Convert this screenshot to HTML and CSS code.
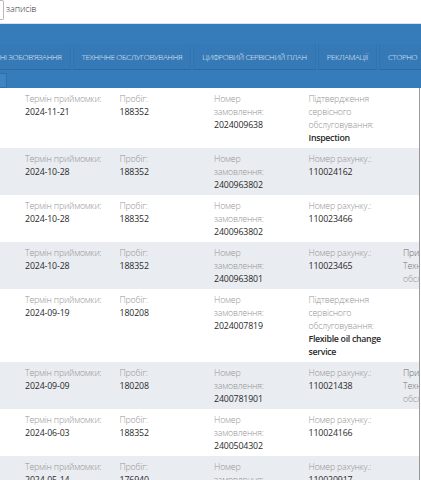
FILE: index.html
```html
<!DOCTYPE html>
<html lang="uk">
<head>
<meta charset="utf-8">
<link rel="stylesheet" href="styles.css">
</head>
<body>
<div class="page">
  <div class="top">
    <span class="lenbox"></span>
    <span class="lentext">записів</span>
  </div>
  <div class="band">
    <div class="tabs">
      <span class="tab">ГАРАНТІЙНІ ЗОБОВ'ЯЗАННЯ</span>
      <span class="tab">ТЕХНІЧНЕ ОБСЛУГОВУВАННЯ</span>
      <span class="tab">ЦИФРОВИЙ СЕРВІСНИЙ ПЛАН</span>
      <span class="tab">РЕКЛАМАЦІЇ</span>
      <span class="tab">СТОРНО</span>
    </div>
    <div class="tools"><span class="tool"></span></div>
  </div>
  <div class="table">
    <div class="row">
      <div class="cell c1"><span class="lbl">Термін приймомки:</span><span class="val">2024-11-21</span></div>
      <div class="cell"><span class="lbl">Пробіг:</span><span class="val">188352</span></div>
      <div class="cell c3"><span class="lbl">Номер замовлення:</span><span class="val">2024009638</span></div>
      <div class="cell"><span class="lbl">Підтвердження сервісного обслуговування:</span><span class="val strong">Inspection</span></div>
      <div class="cell"></div>
    </div>
    <div class="row alt">
      <div class="cell c1"><span class="lbl">Термін приймомки:</span><span class="val">2024-10-28</span></div>
      <div class="cell"><span class="lbl">Пробіг:</span><span class="val">188352</span></div>
      <div class="cell c3"><span class="lbl">Номер замовлення:</span><span class="val">2400963802</span></div>
      <div class="cell"><span class="lbl">Номер рахунку.:</span><span class="val">110024162</span></div>
      <div class="cell"></div>
    </div>
    <div class="row">
      <div class="cell c1"><span class="lbl">Термін приймомки:</span><span class="val">2024-10-28</span></div>
      <div class="cell"><span class="lbl">Пробіг:</span><span class="val">188352</span></div>
      <div class="cell c3"><span class="lbl">Номер замовлення:</span><span class="val">2400963802</span></div>
      <div class="cell"><span class="lbl">Номер рахунку.:</span><span class="val">110023466</span></div>
      <div class="cell"></div>
    </div>
    <div class="row alt">
      <div class="cell c1"><span class="lbl">Термін приймомки:</span><span class="val">2024-10-28</span></div>
      <div class="cell"><span class="lbl">Пробіг:</span><span class="val">188352</span></div>
      <div class="cell c3"><span class="lbl">Номер замовлення:</span><span class="val">2400963801</span></div>
      <div class="cell"><span class="lbl">Номер рахунку.:</span><span class="val">110023465</span></div>
      <div class="cell"><span class="lbl dark">Причина:</span><span class="lbl mid">Технічне</span><span class="lbl">обслуговування</span></div>
    </div>
    <div class="row">
      <div class="cell c1"><span class="lbl">Термін приймомки:</span><span class="val">2024-09-19</span></div>
      <div class="cell"><span class="lbl">Пробіг:</span><span class="val">180208</span></div>
      <div class="cell c3"><span class="lbl">Номер замовлення:</span><span class="val">2024007819</span></div>
      <div class="cell"><span class="lbl">Підтвердження сервісного обслуговування:</span><span class="val strong">Flexible oil change service</span></div>
      <div class="cell"></div>
    </div>
    <div class="row alt">
      <div class="cell c1"><span class="lbl">Термін приймомки:</span><span class="val">2024-09-09</span></div>
      <div class="cell"><span class="lbl">Пробіг:</span><span class="val">180208</span></div>
      <div class="cell c3"><span class="lbl">Номер замовлення:</span><span class="val">2400781901</span></div>
      <div class="cell"><span class="lbl">Номер рахунку.:</span><span class="val">110021438</span></div>
      <div class="cell"><span class="lbl dark">Причина:</span><span class="lbl mid">Технічне</span><span class="lbl">обслуговування</span></div>
    </div>
    <div class="row">
      <div class="cell c1"><span class="lbl">Термін приймомки:</span><span class="val">2024-06-03</span></div>
      <div class="cell"><span class="lbl">Пробіг:</span><span class="val">188352</span></div>
      <div class="cell c3"><span class="lbl">Номер замовлення:</span><span class="val">2400504302</span></div>
      <div class="cell"><span class="lbl">Номер рахунку.:</span><span class="val">110024166</span></div>
      <div class="cell"></div>
    </div>
    <div class="row alt">
      <div class="cell c1"><span class="lbl">Термін приймомки:</span><span class="val">2024-05-14</span></div>
      <div class="cell"><span class="lbl">Пробіг:</span><span class="val">176940</span></div>
      <div class="cell c3"><span class="lbl">Номер замовлення:</span><span class="val">2400412207</span></div>
      <div class="cell"><span class="lbl">Номер рахунку.:</span><span class="val">110020917</span></div>
      <div class="cell"></div>
    </div>
  </div>
</div>
</body>
</html>
```
FILE: styles.css
```css
html, body {
  margin: 0;
  padding: 0;
  background: #ffffff;
}
body {
  font-family: "Open Sans", "Noto Sans", sans-serif;
  overflow: hidden;
}
.page {
  width: 421px;
  height: 480px;
  overflow: hidden;
}
.top {
  height: 23px;
  display: flex;
  align-items: flex-start;
  border-bottom: 1px solid #d5e3ef;
}
.lenbox {
  width: 3px;
  height: 18px;
  border: 1px solid #b9b9b9;
  border-left: none;
  border-radius: 0 2px 2px 0;
}
.lentext {
  margin-left: 2px;
  margin-top: 2px;
  font-size: 9px;
  letter-spacing: -0.1px;
  font-weight: 300;
  color: #333;
}
.band {
  background: #377cba;
  height: 64px;
  display: flex;
  flex-direction: column;
}
.tabs {
  display: flex;
  gap: 4px;
  margin-top: 20px;
  margin-left: -41px;
  height: 26px;
  border-bottom: 1px solid #3273ad;
}
.tab {
  flex: none;
  display: flex;
  align-items: center;
  padding: 0 8px;
  height: 25px;
  background: #3579b6;
  box-shadow: 0 1px 0 #2d6aa2, 1px 0 0 #3373ae, -1px 0 0 #3373ae;
  color: #e6eff8;
  font-size: 7.8px;
  letter-spacing: -0.3px;
  font-weight: 300;
  white-space: nowrap;
}
.tools {
  display: flex;
  margin-top: 3px;
}
.tool {
  width: 6px;
  height: 13px;
  background: #3e84c2;
  border: 1px solid #2f70a8;
  border-left: none;
}
.table {
  width: 419px;
  border-right: 1px solid #9a9a9a;
}
.row {
  display: grid;
  grid-template-columns: repeat(5, 94.5px);
  padding: 5px 0 3px 25px;
  background: #ffffff;
  overflow: hidden;
}
.row.alt {
  background: #e9ecf0;
}
.cell {
  padding-right: 16px;
  display: flex;
  flex-direction: column;
  font-size: 8.8px;
  line-height: 13px;
}
.cell.c1 {
  white-space: nowrap;
}
.cell.c3 {
  padding-right: 34px;
}
.lbl {
  color: #949494;
  font-weight: 300;
  letter-spacing: -0.2px;
}
.lbl.dark {
  color: #6a6a6a;
}
.lbl.mid {
  color: #7a7a7a;
}
.val {
  color: #2a2a2a;
  letter-spacing: -0.15px;
}
.val.strong {
  font-weight: 600;
  letter-spacing: -0.3px;
}
```
